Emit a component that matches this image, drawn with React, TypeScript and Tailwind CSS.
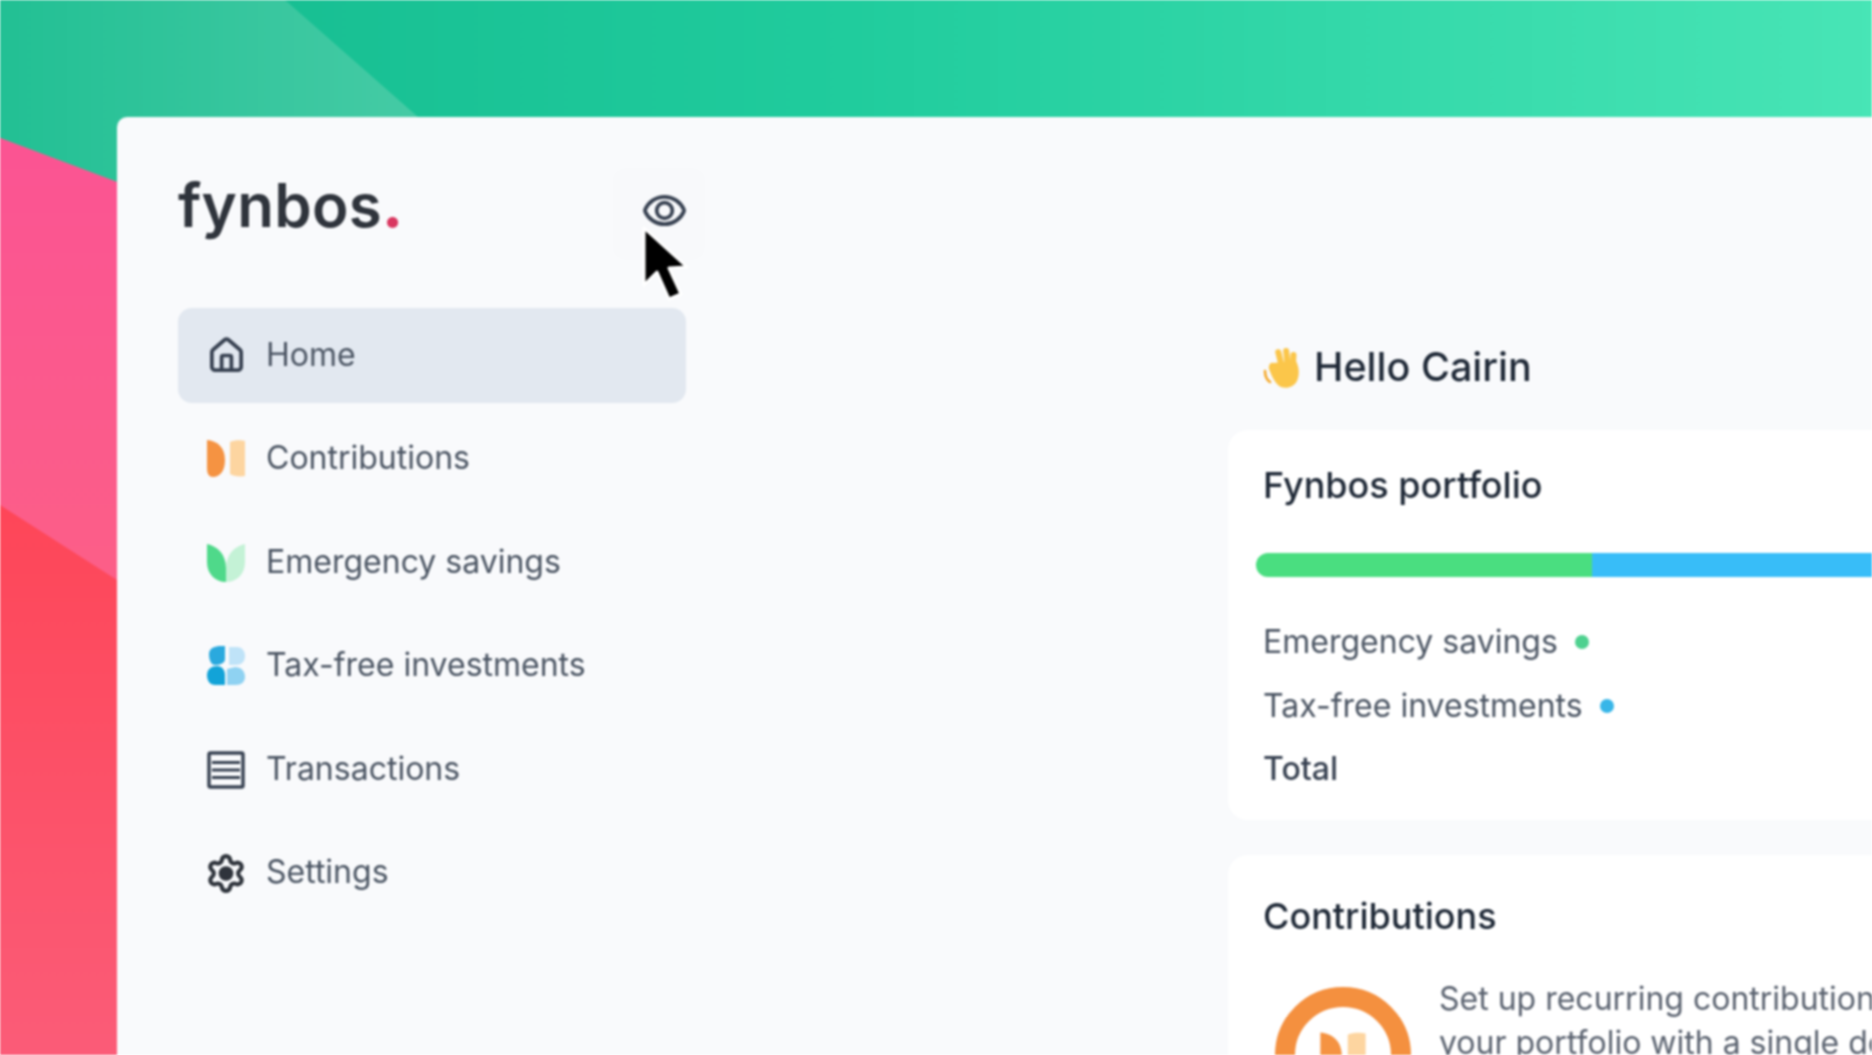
import React from 'react';
import { Eye, House, Settings } from 'lucide-react';

const OrangeIcon = ({ size = 42 }: { size?: number }) => (
  <svg width={size} height={size} viewBox="0 0 42 42" className="shrink-0">
    <path d="M2 2 C12 3 20 9 20 22 C20 34 14 39 8 39 C4 39 2 36 2 30 Z" fill="#f59342" />
    <path d="M25 4 C29 2 36 2 40 3 L40 38 C34 39 28 38 25 36 Z" fill="#fdd5a0" />
  </svg>
);

const LeafIcon = () => (
  <svg width="42" height="42" viewBox="0 0 42 42" className="shrink-0">
    <path d="M2 2 C12 4 21 12 21 26 L21 40 C10 40 2 32 2 20 Z" fill="#4fd98a" />
    <path d="M40 2 C30 4 21 12 21 26 L21 40 C32 40 40 32 40 20 Z" fill="#c4f2d6" />
  </svg>
);

const DropsIcon = () => (
  <svg width="42" height="42" viewBox="0 0 42 42" className="shrink-0">
    <path d="M4 9 C4 3 10 1 16 1 L20 1 L20 14 C20 18 15 20 10 20 C6 20 4 15 4 9 Z" fill="#2aa9de" />
    <path d="M2 30 C2 24 7 21 12 21 C17 21 20 25 20 30 L20 40 L10 40 C5 40 2 36 2 30 Z" fill="#12a3d8" />
    <path d="M24 2 L32 2 C37 2 40 6 40 11 C40 17 36 20 31 20 L24 20 Z" fill="#bfe3f8" />
    <path d="M22 24 L30 22 C36 22 40 26 40 32 C40 37 36 40 31 40 L22 40 Z" fill="#8fd2f2" />
  </svg>
);

const ListIcon = () => (
  <svg width="40" height="40" viewBox="0 0 40 40" fill="none" stroke="#374151" strokeWidth="3.4" className="shrink-0">
    <rect x="3" y="3" width="34" height="34" rx="1.5" />
    <path d="M6 12.5 H34 M6 20 H34 M6 27.5 H34" strokeWidth="2.8" />
  </svg>
);

const WaveHand = () => (
  <svg width="40" height="42" viewBox="0 0 40 42" className="shrink-0">
    <g fill="#fbc64a">
      <rect x="14" y="2" width="6" height="20" rx="3" transform="rotate(-14 17 12)" />
      <rect x="21" y="1" width="6" height="22" rx="3" transform="rotate(-6 24 12)" />
      <rect x="27" y="5" width="6" height="20" rx="3" transform="rotate(4 30 15)" />
      <path d="M10 16 L33 14 C36 20 37 27 34 34 C31 40 24 42 18 40 C13 38 9 30 6 22 C5 18 8 15 10 16 Z" />
    </g>
    <path d="M2 24 C2 29 4 33 7 35" stroke="#f5a623" strokeWidth="2.5" fill="none" strokeLinecap="round" />
  </svg>
);

const Cursor = () => (
  <svg width="56" height="78" viewBox="0 0 56 78" className="absolute left-[640px] top-[225px] z-10">
    <path d="M4 3 L4 60 L17 47 L29 74 L41 69 L29 43 L47 42 Z" fill="#000" stroke="#fff" strokeWidth="3" strokeLinejoin="round" />
  </svg>
);

const NavRow = ({ icon, label, active }: { icon: React.ReactNode; label: string; active?: boolean }) => (
  <div className={`flex items-center h-[95px] pl-[27px] gap-[19px] rounded-[14px] ${active ? 'bg-[#e2e8f0]' : ''}`}>
    <div className="w-[42px] flex justify-center">{icon}</div>
    <span className="text-[32px] pb-[2px] text-[#4b5563]">{label}</span>
  </div>
);

const App = () => {
  return (
    <div className="relative w-[1872px] h-[1055px] overflow-hidden bg-[#fb5a78] font-['Inter',sans-serif] blur-[0.8px]">
      <svg width="1872" height="1055" viewBox="0 0 1872 1055" className="absolute inset-0">
        <defs>
          <linearGradient id="green" x1="0" y1="0" x2="1" y2="0">
            <stop offset="0" stopColor="#14b98e" />
            <stop offset="0.45" stopColor="#20cc9d" />
            <stop offset="1" stopColor="#48e5b6" />
          </linearGradient>
          <linearGradient id="lightGreen" x1="0" y1="0" x2="1" y2="0">
            <stop offset="0" stopColor="#22c094" />
            <stop offset="1" stopColor="#45cba5" />
          </linearGradient>
          <linearGradient id="pink" x1="0" y1="0" x2="0" y2="1">
            <stop offset="0" stopColor="#fb5493" />
            <stop offset="1" stopColor="#fd6a7c" />
          </linearGradient>
          <linearGradient id="red" x1="0" y1="0" x2="0" y2="1">
            <stop offset="0" stopColor="#fe4658" />
            <stop offset="1" stopColor="#fb5c78" />
          </linearGradient>
        </defs>
        <rect width="1872" height="130" fill="url(#green)" />
        <polygon points="0,0 285,0 418,117 117,182 0,138" fill="url(#lightGreen)" />
        <polygon points="0,138 117,182 117,1055 0,1055" fill="url(#pink)" />
        <polygon points="0,505 117,580 117,1055 0,1055" fill="url(#red)" />
      </svg>

      <Cursor />

      <div className="relative ml-[117px] mt-[117px] h-[938px] flex bg-[#f9fafc] rounded-tl-[10px]">
        <div className="w-[569px] shrink-0 pl-[61px]">
          <div className="flex items-start justify-between h-[191px] pt-[52px]">
            <div className="font-semibold text-[60px] leading-[72px] tracking-[0.3px] text-[#2f343c]">
              fynbos<span className="font-extrabold text-[#d9365f]">.</span>
            </div>
            <div className="w-[92px] h-[92px] -mr-[19px] -mt-[1px] pl-[11px] pb-[8px] flex items-center justify-center rounded-[14px] bg-[#f8f9fb]">
              <Eye size={47} strokeWidth={1.9} className="text-[#374151] [&>circle]:[r:4]" />
            </div>
          </div>
          <nav className="flex flex-col gap-[8.6px]">
            <NavRow active icon={<House size={39} strokeWidth={2.3} className="text-[#374151]" />} label="Home" />
            <NavRow icon={<OrangeIcon />} label="Contributions" />
            <NavRow icon={<LeafIcon />} label="Emergency savings" />
            <NavRow icon={<DropsIcon />} label="Tax-free investments" />
            <NavRow icon={<ListIcon />} label="Transactions" />
            <NavRow icon={<Settings size={43} strokeWidth={2.4} className="text-[#2f343c] [&>circle]:fill-current" />} label="Settings" />
          </nav>
        </div>

        <main className="ml-[542px] flex-1 min-w-0 overflow-hidden">
          <div className="flex items-center h-[313px] pt-[189px] pl-[35px] gap-[11px] box-border">
            <WaveHand />
            <h1 className="text-[39.5px] font-medium text-[#1f2937] whitespace-nowrap">Hello Cairin</h1>
          </div>
          <section className="h-[390px] bg-white rounded-l-[20px] pl-[35px] pt-[34px]">
            <h2 className="text-[36px] leading-[42px] font-medium text-[#1f2937]">Fynbos portfolio</h2>
            <div className="flex h-[24px] mt-[47px] -ml-[7px] rounded-l-full overflow-hidden">
              <div className="w-[336px] bg-[#4ade80]" />
              <div className="flex-1 bg-[#38bdf8]" />
            </div>
            <div className="flex flex-col gap-[23.5px] mt-[45px] text-[32px] leading-[40px] text-[#4b5563]">
              <div className="flex items-center gap-[17px]">
                <span>Emergency savings</span>
                <span className="w-[14px] h-[14px] rounded-full bg-[#4ed18f]" />
              </div>
              <div className="flex items-center gap-[17px]">
                <span>Tax-free investments</span>
                <span className="w-[14px] h-[14px] rounded-full bg-[#38b6e8]" />
              </div>
              <div className="text-[#374151] font-medium">Total</div>
            </div>
          </section>
          <section className="h-[300px] mt-[35px] bg-white rounded-l-[20px] pl-[35px] pt-[40px]">
            <h2 className="text-[36px] leading-[42px] font-medium text-[#1f2937]">Contributions</h2>
            <div className="flex mt-[50px] ml-[12px] gap-[28px]">
              <div className="w-[136px] h-[136px] shrink-0 rounded-full border-[20px] border-[#f4903f] flex items-center justify-center">
                <OrangeIcon size={50} />
              </div>
              <p className="text-[32px] leading-[44px] mt-[-10px] text-[#5b6370] whitespace-nowrap">
                Set up recurring contributions
                <br />
                your portfolio with a single debit
              </p>
            </div>
          </section>
        </main>
      </div>
    </div>
  );
};

export default App;
